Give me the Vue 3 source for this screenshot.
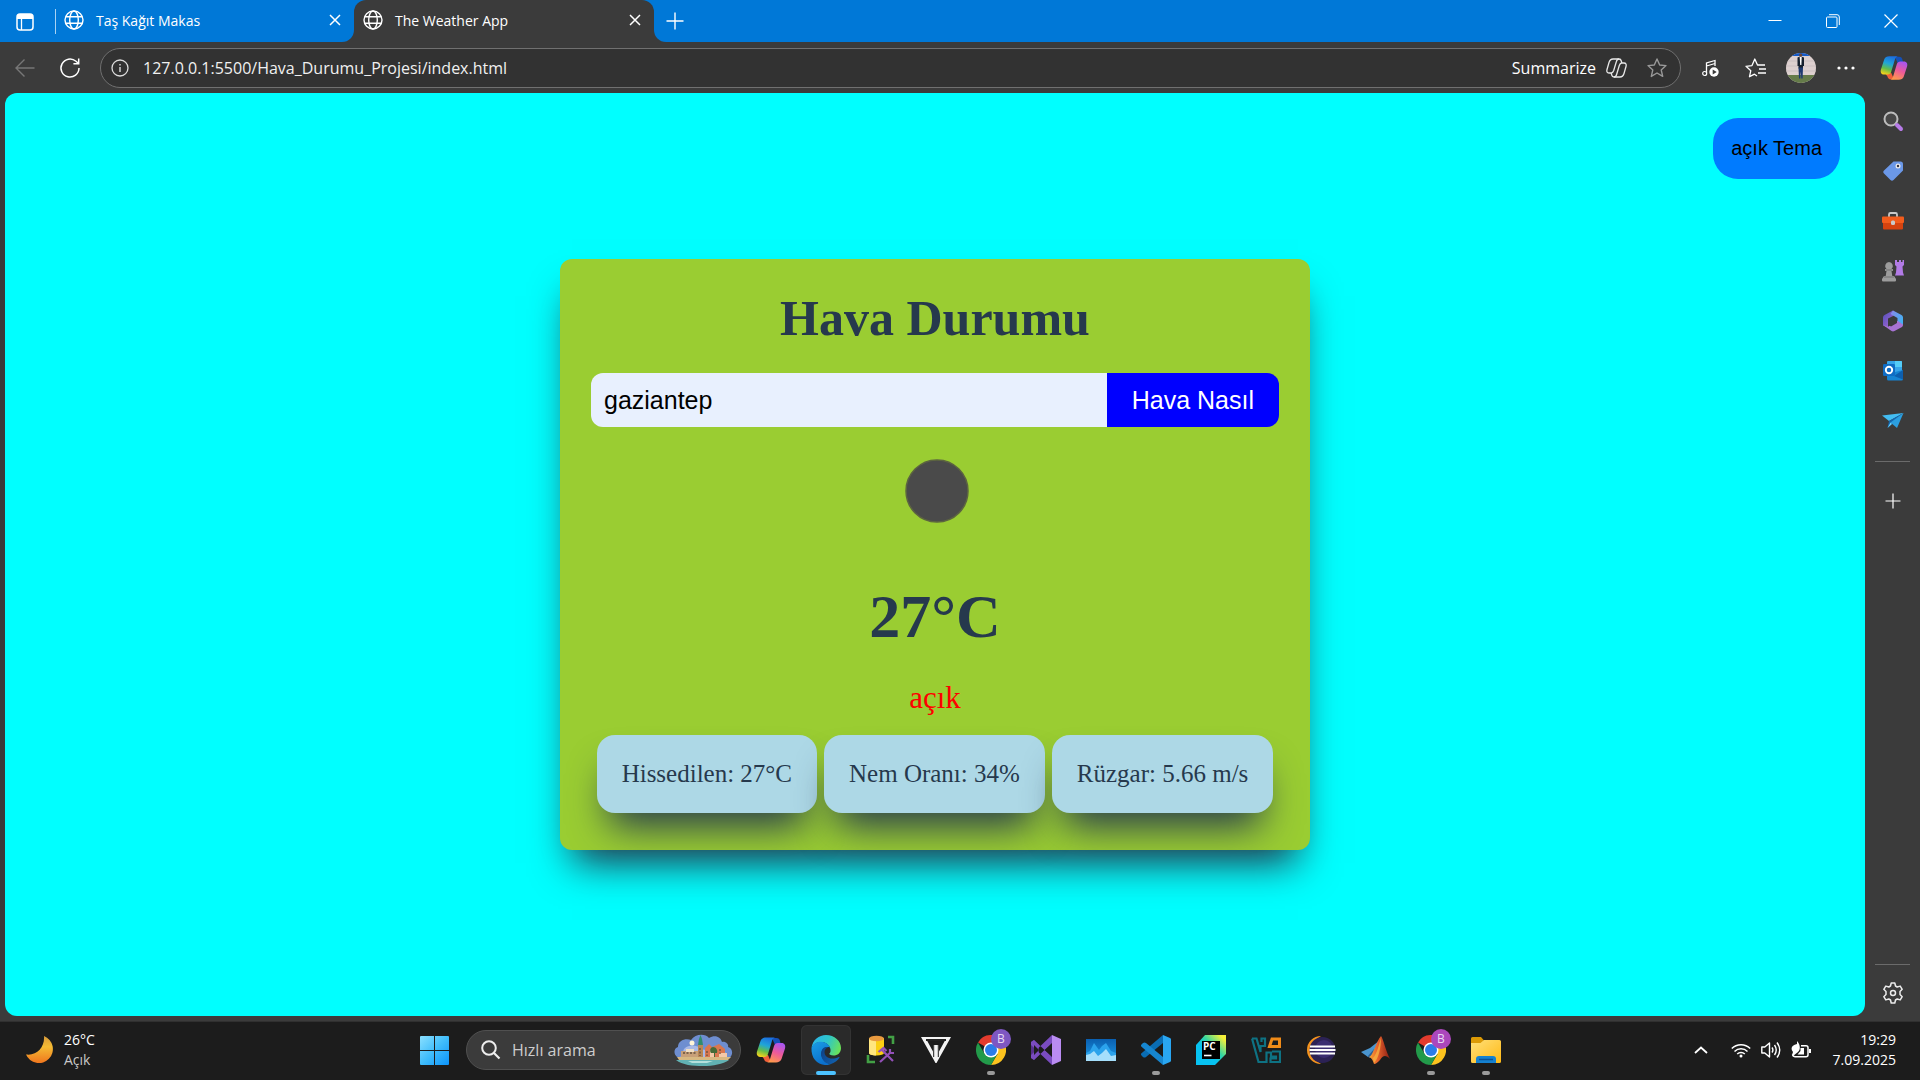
<script setup>
import { ref } from 'vue'

const city = ref('gaziantep')
const address = ref('127.0.0.1:5500/Hava_Durumu_Projesi/index.html')
const search = ref('')
const details = ['Hissedilen: 27°C', 'Nem Oranı: 34%', 'Rüzgar: 5.66 m/s']
</script>

<template>
  <div class="desktop">
    <svg class="defs" aria-hidden="true">
      <defs>
        <linearGradient id="cpA" x1="0.6" y1="0" x2="0.3" y2="1">
          <stop offset="0" stop-color="#1b6fe0" /><stop offset="0.4" stop-color="#1fa5d8" />
          <stop offset="0.7" stop-color="#63bd4a" /><stop offset="1" stop-color="#f4d21b" />
        </linearGradient>
        <linearGradient id="cpB" x1="0.7" y1="0" x2="0.3" y2="1">
          <stop offset="0" stop-color="#a855f0" /><stop offset="0.5" stop-color="#ee5a9a" />
          <stop offset="1" stop-color="#ff9a4a" />
        </linearGradient>
        <linearGradient id="edA" x1="0" y1="0.3" x2="1" y2="0.6">
          <stop offset="0" stop-color="#2bb5ea" /><stop offset="0.5" stop-color="#2ec5c9" />
          <stop offset="1" stop-color="#6be257" />
        </linearGradient>
        <linearGradient id="edB" x1="0" y1="0" x2="0.5" y2="1">
          <stop offset="0" stop-color="#1a9ee6" /><stop offset="1" stop-color="#0b6fcb" />
        </linearGradient>
        <linearGradient id="edC" x1="0" y1="0" x2="1" y2="0.6">
          <stop offset="0" stop-color="#0d3f85" /><stop offset="1" stop-color="#1160ad" />
        </linearGradient>
        <linearGradient id="moon" x1="0" y1="0" x2="0" y2="1">
          <stop offset="0" stop-color="#d89a3a" /><stop offset="0.4" stop-color="#f4bb33" /><stop offset="1" stop-color="#f0761e" />
        </linearGradient>
        <linearGradient id="win" x1="0" y1="0" x2="1" y2="1">
          <stop offset="0" stop-color="#8be0ff" /><stop offset="0.5" stop-color="#40bdfb" /><stop offset="1" stop-color="#0c93fa" />
        </linearGradient>
        <linearGradient id="pc" x1="0" y1="1" x2="1" y2="0">
          <stop offset="0.4" stop-color="#07c3f2" /><stop offset="0.6" stop-color="#35d6a0" /><stop offset="0.9" stop-color="#f5f03a" />
        </linearGradient>
        <linearGradient id="fold" x1="0" y1="0" x2="1" y2="1">
          <stop offset="0" stop-color="#ffe07a" /><stop offset="1" stop-color="#ffb914" />
        </linearGradient>
        <linearGradient id="mat" x1="0" y1="0" x2="1" y2="0">
          <stop offset="0" stop-color="#f7a734" /><stop offset="0.4" stop-color="#e8632c" /><stop offset="1" stop-color="#8a1d14" />
        </linearGradient>
        <linearGradient id="mA" x1="0" y1="0" x2="1" y2="1">
          <stop offset="0" stop-color="#4f4fb8" /><stop offset="1" stop-color="#b06ad8" />
        </linearGradient>
        <linearGradient id="mB" x1="0" y1="0" x2="1" y2="0.6">
          <stop offset="0" stop-color="#8d86e8" /><stop offset="1" stop-color="#44b0f2" />
        </linearGradient>
        <linearGradient id="photo" x1="0" y1="0" x2="0" y2="1">
          <stop offset="0" stop-color="#0a5fb0" /><stop offset="1" stop-color="#1c9be6" />
        </linearGradient>
        <clipPath id="face"><circle cx="15" cy="15" r="15" /></clipPath>
      </defs>
      <symbol id="globe" viewBox="0 0 20 20">
        <g fill="none" stroke="#fff" stroke-width="1.4">
          <circle cx="10" cy="10" r="9" /><ellipse cx="10" cy="10" rx="4.3" ry="9" /><path d="M1.8 6.8h16.4M1.8 13.2h16.4" />
        </g>
      </symbol>
      <symbol id="cross" viewBox="0 0 14 14"><path d="M2 2l10 10M12 2L2 12" stroke="#fff" stroke-width="1.5" /></symbol>
      <symbol id="copilot" viewBox="0 0 30 28">
        <path fill="#1450b8" d="M16 2h4.500c2.200 0 3 1.200 3.500 3l1 4h-6z" />
        <path fill="#f0603a" d="M5 19h7l3 7H11.500c-2 0-3-1-3.500-3z" />
        <path fill="url(#cpA)" d="M10 1.500h9c-1.800.6-2.600 2-3.200 4L12 18c-.6 1.900-1.900 3-3.800 3H4.500C1.200 21 .2 18.500 1 15.500L4.500 5C5.300 2.700 7.400 1.500 10 1.500z" />
        <path fill="url(#cpB)" d="M20 26.500h-9c1.800-.6 2.600-2 3.200-4L18 10c.6-1.900 1.900-3 3.800-3h3.700c3.300 0 4.300 2.500 3.500 5.500L25.500 23c-.8 2.300-2.900 3.500-5.500 3.500z" />
      </symbol>
      <symbol id="chrome" viewBox="0 0 30 30">
        <path fill="#e33b2e" d="M15 15L2 7.500A15 15 0 0 1 28 7.500H15z" />
        <path fill="#fcc31e" d="M15 15V7.500h13A15 15 0 0 1 15 30l6.500-11z" />
        <path fill="#229a4a" d="M2 7.500l6.500 11.200L15 22.500h2.200L13.500 30A15 15 0 0 1 2 7.500z" />
        <path fill="#229a4a" d="M13.500 30l1.500 0 6.500-11.300L15 22z" />
        <circle cx="15" cy="15" r="7.500" fill="#fff" /><circle cx="15" cy="15" r="6" fill="#2b7de9" />
      </symbol>
    </svg>

    <header class="titlebar">
      <div class="tabs-left">
        <button class="plain workspace" aria-label="Workspaces">
          <svg width="18" height="18" viewBox="0 0 18 18"><rect x="1" y="1" width="16" height="16" rx="3" fill="none" stroke="#fff" stroke-width="1.5" /><path d="M1 4a3 3 0 0 1 3-3h10a3 3 0 0 1 3 3v2H1z" fill="#fff" /><path d="M5.500 5v12" stroke="#fff" stroke-width="1.300" /></svg>
        </button>
        <div class="tab">
          <svg width="20" height="20"><use href="#globe" /></svg><span>Taş Kağıt Makas</span>
          <button class="plain" aria-label="Close tab"><svg width="14" height="14"><use href="#cross" /></svg></button>
        </div>
      </div>
      <div class="tab-active-wrap">
        <div class="tab active">
          <svg width="20" height="20"><use href="#globe" /></svg><span>The Weather App</span>
          <button class="plain" aria-label="Close tab"><svg width="14" height="14"><use href="#cross" /></svg></button>
        </div>
      </div>
      <div class="tabs-right">
        <button class="plain" aria-label="New tab"><svg width="18" height="18" viewBox="0 0 18 18"><path d="M9 0.500v17M0.500 9h17" stroke="#fff" stroke-width="1.400" /></svg></button>
        <div class="window-controls">
          <button class="plain" aria-label="Minimize"><svg width="14" height="14" viewBox="0 0 14 14"><path d="M0.500 6.500h13" stroke="#fff" /></svg></button>
          <button class="plain" aria-label="Restore"><svg width="14" height="14" viewBox="0 0 14 14" fill="none" stroke="#fff"><rect x="0.500" y="3" width="10.500" height="10.500" rx="1" /><path d="M3 0.700h8a2.300 2.300 0 0 1 2.300 2.300v8" /></svg></button>
          <button class="plain" aria-label="Close"><svg width="14" height="14" viewBox="0 0 14 14"><path d="M0.500 0.500l13 13M13.500 0.500l-13 13" stroke="#fff" stroke-width="1.200" /></svg></button>
        </div>
      </div>
    </header>

    <div class="toolbar">
      <button class="plain back" aria-label="Back"><svg width="20" height="20" viewBox="0 0 20 20"><path d="M19.500 10H1M9.500 1.500L1 10l8.500 8.500" fill="none" stroke="#777" stroke-width="1.400" /></svg></button>
      <button class="plain reload" aria-label="Reload"><svg width="22" height="22" viewBox="0 0 22 22"><path d="M20 11a9 9 0 1 1-3-6.700L19.500 6.500M19.700 1.500v5.300h-5.300" fill="none" stroke="#fff" stroke-width="1.500" /></svg></button>
      <div class="omnibox">
        <svg width="18" height="18" viewBox="0 0 18 18"><circle cx="9" cy="9" r="8" fill="none" stroke="#ddd" stroke-width="1.300" /><path d="M9 8v5M9 5v1.500" stroke="#ddd" stroke-width="1.400" /></svg>
        <input v-model="address" aria-label="Address" />
        <button class="plain summarize">Summarize
          <svg width="21" height="20" viewBox="0 0 21 20" fill="none" stroke="#e8e8e8" stroke-width="1.300" stroke-linejoin="round"><path d="M7 1h6c1.500 0 2 .8 2.300 2l.5 2H18c2 0 2.500 1.600 2 3.500l-2 7c-.6 2-1.500 3.500-4 3.500H8c-1.500 0-2-.8-2.300-2L5.200 15H3c-2 0-2.500-1.600-2-3.500l2-7C3.600 2.500 4.500 1 7 1z" /><path d="M13 1c-1.500 0-2.200 1-2.600 2.500L7.700 12.500C7.200 14 6.500 15 5.200 15M8 19c1.500 0 2.200-1 2.600-2.500l2.700-9C13.800 6 14.500 5 15.800 5" /></svg>
        </button>
        <button class="plain" aria-label="Favorite"><svg width="20" height="20" viewBox="0 0 20 20"><path d="M10 1l2.700 6 6.300.6-4.800 4.300 1.500 6.500L10 15l-5.700 3.400 1.500-6.500L1 7.600 7.300 7z" fill="none" stroke="#999" stroke-width="1.400" stroke-linejoin="round" /></svg></button>
      </div>
      <div class="tool-actions">
        <button class="plain" aria-label="Media"><svg width="17" height="18" viewBox="0 0 17 18"><path d="M4.500 14V4l8.500-2.500V7M4.500 7L13 4.500" fill="none" stroke="#fff" stroke-width="1.300" /><circle cx="2.700" cy="14.500" r="2" fill="none" stroke="#fff" stroke-width="1.200" /><circle cx="12" cy="13" r="4.700" fill="#fff" /><path d="M10.700 10.500v5l4-2.500z" fill="#3b3b3b" /></svg></button>
        <button class="plain" aria-label="Favorites"><svg width="21" height="20" viewBox="0 0 21 20" fill="none" stroke="#fff" stroke-width="1.300" stroke-linejoin="round"><path d="M12 18l-2.500-1.800-5 2.500 1.300-6L1 8.300l6-.7L9.800 1l2.700 6H20M14 11h7M13 15h8" /></svg></button>
        <button class="plain" aria-label="Profile"><svg width="30" height="30" viewBox="0 0 30 30"><g clip-path="url(#face)"><path fill="#ddd0cf" d="M0 0h30v30H0z" /><path fill="#155ac8" d="M0 0h30v3H0z" /><path fill="#657b49" d="M0 22h30v8H0z" /><path d="M0 8h30M0 13h30M0 18h30" stroke="#cbbfc0" /><path fill="#17202e" d="M11.500 4.500l2.500-1h1l3 1V13h-1v2.500h-4.500V13h-1z" /><path fill="#fff" d="M13.700 4h2l-.3 8h-1.200z" /><circle cx="14.700" cy="2" r="1.600" fill="#6b4637" /><path fill="#1e3a70" d="M12.500 14.500h4.500l-.4 11h-1.300l-.5-7-.5 7H13z" /></g></svg></button>
        <button class="plain" aria-label="More"><svg width="18" height="4" viewBox="0 0 18 4" fill="#fff"><circle cx="2" cy="2" r="1.600" /><circle cx="9" cy="2" r="1.600" /><circle cx="16" cy="2" r="1.600" /></svg></button>
        <button class="plain wide" aria-label="Copilot"><svg width="28" height="28"><use href="#copilot" /></svg></button>
      </div>
    </div>

    <div class="content">
      <main class="page">
        <button class="theme">açık Tema</button>
        <section class="card">
          <h1>Hava Durumu</h1>
          <form @submit.prevent>
            <input v-model="city" aria-label="Şehir" />
            <button>Hava Nasıl</button>
          </form>
          <svg class="weather-icon" viewBox="0 0 124 124" role="img" aria-label="açık"><circle cx="64" cy="62" r="31" fill="#4a4a4a" stroke="#5c6440" stroke-width="1.500" /></svg>
          <h2>27°C</h2>
          <p>açık</p>
          <div class="details"><div v-for="d in details" :key="d" class="detail">{{ d }}</div></div>
        </section>
      </main>

      <aside class="sidebar">
        <button class="plain" aria-label="Search"><svg width="22" height="22" viewBox="0 0 22 22"><circle cx="9" cy="9" r="6.500" fill="#484848" stroke="#bdbdbd" stroke-width="2" /><path d="M15 15l4 4" stroke="#b77be8" stroke-width="4" stroke-linecap="round" /></svg></button>
        <button class="plain" aria-label="Shopping"><svg width="22" height="22" viewBox="0 0 22 22"><path d="M11.500 1.500h7A2.500 2.500 0 0 1 21 4v6.500L11.500 20c-1 1-2 1-3 0L2 13.500c-1-1-1-2 0-3z" fill="#6b98e8" /><circle cx="16" cy="6" r="2.500" fill="#eee" /><circle cx="16" cy="6" r="1.200" fill="#334" /></svg></button>
        <button class="plain" aria-label="Tools"><svg width="22" height="20" viewBox="0 0 22 20"><path d="M7 6V3.500A1.500 1.500 0 0 1 8.500 2h5A1.500 1.500 0 0 1 15 3.500V6" fill="none" stroke="#c9c9c9" stroke-width="1.800" /><rect y="5.500" width="22" height="6.500" rx="1" fill="#f25c1c" /><path d="M1 12h20v5.500a1 1 0 0 1-1 1H2a1 1 0 0 1-1-1z" fill="#d6430f" /><rect x="9" y="9.500" width="4" height="4.500" rx="1.500" fill="#c9c9c9" /></svg></button>
        <button class="plain" aria-label="Games"><svg width="22" height="22" viewBox="0 0 22 22"><path d="M13 0h2v2h2V0h2v2h1.500V0H22v5l-1.500 1.500.5 6 1 3h-9l1-3 .5-6L13 5z" fill="#b27be6" /><path d="M7 2a4 4 0 0 1 2.500 7h1.500v2H9.500l.8 5H12l2 3v1.500a1 1 0 0 1-1 1H1a1 1 0 0 1-1-1V19l2-3h1.700l.8-5H3V9h1.500A4 4 0 0 1 7 2z" fill="#9c9c9c" /><path d="M3.500 10h7M2 17h10" stroke="#707070" stroke-width="1.200" /></svg></button>
        <button class="plain" aria-label="Microsoft 365"><svg width="22" height="22" viewBox="0 0 22 22"><path d="M11 .5L2.500 5A3 3 0 0 0 1 7.500v8l5 2V8.500L13 5z" fill="url(#mA)" /><path d="M11 .5l8.500 4.500A3 3 0 0 1 21 7.500v8l-5.500-4V8L8.500 4z" fill="url(#mB)" /><path d="M1 15l8.500 6a3 3 0 0 0 3 0L20 17a3 3 0 0 0 1-2.500l-5.500-3.700L6 16.800z" fill="#a873d4" /><path d="M11 7l4 2v4l-6 3.500-2.500-1.500V9z" fill="#3b3b3b" /></svg></button>
        <button class="plain" aria-label="Outlook"><svg width="22" height="20" viewBox="0 0 22 20"><rect x="5" width="15" height="18" rx="1" fill="#36a5ea" /><path d="M13 0h6a1 1 0 0 1 1 1v5h-7z" fill="#54cdf8" /><path d="M5 13l8-2 8-2v9a1.500 1.500 0 0 1-1.500 1.500h-13A1.500 1.500 0 0 1 5 18z" fill="#1684d3" /><path d="M12 15l9-6v9.500z" fill="#0d5fae" /><rect x="1" y="3" width="12" height="12" rx="1.200" fill="#0f6cc4" /><circle cx="7" cy="9" r="3.200" fill="none" stroke="#fff" stroke-width="1.900" /></svg></button>
        <button class="plain" aria-label="Drop"><svg width="22" height="18" viewBox="0 0 22 18"><path d="M0 3.500L21.500 1 7 9z" fill="#43bdf2" /><path d="M21.500 1L7 9l-1.500 7z" fill="#1467b0" /><path d="M21.500 1L8.500 10.500 15 16z" fill="#2b9fe0" /><path d="M5.500 16l3-5.500L10 12z" fill="#6bd2fa" /></svg></button>
        <hr />
        <button class="plain" aria-label="Add"><svg width="16" height="16" viewBox="0 0 16 16"><path d="M8 0.500v15M0.500 8h15" stroke="#fff" stroke-width="1.200" /></svg></button>
        <hr class="bottom" />
        <button class="plain gear" aria-label="Settings"><svg width="22" height="22" viewBox="0 0 22 22" fill="none" stroke="#ececec" stroke-width="1.500" stroke-linejoin="round"><path d="M9.200 1h3.600l.7 3 1.700 1 3-.9 2 3.200-2.200 2.200v3l2.200 2.200-2 3.200-3-.9-1.700 1-.7 3H9.200l-.7-3-1.700-1-3 .9-2-3.200L4 12.500v-3L1.800 7.300l2-3.200 3 .9 1.700-1z" /><circle cx="11" cy="11" r="2.500" /></svg></button>
      </aside>
    </div>

    <footer class="taskbar">
      <div class="weather">
        <svg width="30" height="30" viewBox="0 0 30 30"><path d="M19 1A14 14 0 1 1 1 19.500C12 21 20 12 19 1z" fill="url(#moon)" /></svg>
        <div><span>26°C</span><span class="dim">Açık</span></div>
      </div>
      <nav class="apps">
        <button class="app" aria-label="Start"><svg width="29" height="29" viewBox="0 0 29 29" fill="url(#win)"><path d="M1 0h13v14H0V1a1 1 0 0 1 1-1zM15 0h13a1 1 0 0 1 1 1v13H15zM0 15h14v14H1a1 1 0 0 1-1-1zM15 15h14v13a1 1 0 0 1-1 1H15z" /></svg></button>
        <label class="search">
          <svg width="20" height="20" viewBox="0 0 20 20"><circle cx="8" cy="8" r="6.800" fill="none" stroke="#eee" stroke-width="2" /><path d="M13 13l5.500 5.500" stroke="#eee" stroke-width="2.200" /></svg>
          <input v-model="search" placeholder="Hızlı arama" />
          <svg width="60" height="32" viewBox="0 0 60 32">
            <path d="M6 24C-1 23-1 14 4 13c0-7 8-9 13-7C21 0 31-1 35 4c6-4 12-1 13 4 4-1 7 3 6 5 5 1 6 9 0 12z" fill="#6e8ed0" />
            <path d="M10 15c6-6 14-3 18 0s18-2 24 4v5H6z" fill="#a9b9e6" /><circle cx="18" cy="9" r="2.500" fill="#fff5d8" />
            <path fill="#c8a078" d="M7 17h18v8H7z" /><path fill="#f1dfc4" d="M12 15h8v3h-8z" /><path fill="#b98756" d="M24 11h5v14h-5z" /><path fill="#2f8c6c" d="M24 11l1-6 1.500-4L28 5l1 6z" /><path fill="#d9774f" d="M31 14l4-4 3 3 5-2 2-1 6 5v10H31z" /><path fill="#f4c9a8" d="M36 16h4v9h-4zM45 19h8v6h-8z" /><path fill="#466b37" d="M39 13c3 0 5 3 4 6h-2v6h-1v-6h-3c-2-3 0-6 2-6z" />
            <path d="M9 19h14M26 14v8M46 15v5M33 17v5" stroke="#66503e" stroke-width="1.300" stroke-dasharray="2 1.500" />
            <path fill="#d8b982" d="M3 23h54l-3 3H5z" /><path fill="#62b2b3" d="M2 26h53c-6 4-16 6-26 6S8 31 2 26z" /><path fill="#b5e0dc" d="M14 27h25l-6 2H18z" />
          </svg>
        </label>
        <button class="app first" aria-label="Copilot"><svg width="30" height="28"><use href="#copilot" /></svg></button>
        <button class="app current" aria-label="Edge"><svg width="30" height="30" viewBox="0 0 30 30"><path fill="url(#edA)" d="M.5 13C1.500 5 8 0 15 0c8.500 0 15 6 15 13 0 5-3.500 7.500-7.500 7.500-3 0-4.500-1-4.100-1.900 2.100-1.600 1.600-7.100-2.900-10.100C10 5.500 3 7.500.5 13z" /><path fill="url(#edB)" d="M.5 13C2 7.500 9 5 14.500 7.800c3.500 1.800 4.500 4.200 4.300 4.700C14 10.500 8.500 16 11 22c1.500 4 6 7 9 7-2 1-5 1-6 1C6 29.500 0 23 .5 13z" /><path fill="url(#edC)" d="M10.500 16c-2 7 3.500 13.500 9.500 13 4-1.200 7-4 8.500-6.500.3-.5-.2-.7-.7-.5-7.800 3.500-14.300.5-14.300-5 0-2.500 1.500-4 3.500-4.800-3-.7-5.500.8-6.500 3.800z" /></svg></button>
        <button class="app" aria-label="Database tools"><svg width="30" height="30" viewBox="0 0 30 30"><path d="M22 2h5v7M2 20v7h7" fill="none" stroke="#42a045" stroke-width="2.600" /><path d="M3 3h15v15a7.500 2.500 0 0 1-15 0z" fill="#fbcf13" /><path d="M3 3h7v17.500c-4-.2-7-1-7-2.500z" fill="#ffe680" /><ellipse cx="10.500" cy="3.500" rx="7.500" ry="2.800" fill="#e99a3f" /><path d="M14 27l11-10M16 15l11 11M12.500 17l5-4 3 3M24 14v4h4" fill="none" stroke="#9250b8" stroke-width="2.200" /></svg></button>
        <button class="app" aria-label="Studio"><svg width="30" height="26" viewBox="0 0 30 26"><path d="M0 0h30L15.500 26h-1zM6 3.500l6 11V8h6v6.500l6-11z" fill="#f4f4f4" fill-rule="evenodd" /><path d="M5 3h20" stroke="#222" stroke-width="2" /><path d="M13.700 8h2.600v15h-2.600z" fill="#f4f4f4" /><path d="M12.700 6v14M17.300 6v14" stroke="#1c1c1c" /></svg></button>
        <button class="app running" aria-label="Chrome"><svg width="30" height="30"><use href="#chrome" /></svg><span class="badge">B</span></button>
        <button class="app" aria-label="Visual Studio"><svg width="30" height="30" viewBox="0 0 30 30"><path fill="#55308c" d="M0 7l3-2 5 5v10l-5 5-3-2z" /><path fill="#7a4cc0" d="M3 5l18 17v8L0 10V7zM3 25L21 8V0L0 20v3z" /><path fill="#ba8cf2" d="M21 0l9 4v22l-9 4z" /><path fill="#1c1c1c" d="M3 10l5 5-5 5zM21 9v12l-7-6z" /></svg></button>
        <button class="app" aria-label="Monitor"><svg width="30" height="22" viewBox="0 0 30 22"><path fill="url(#photo)" d="M0 0h30v22H0z" /><path fill="#2ba3ec" d="M0 14l4-2 4-8 5 7 3-4 4-3 5 8 5 2v8H0z" /><path fill="#a5defb" d="M0 16l4-1 4-3 4 5 4-3 4-4 5 7 5-1v6H0z" /></svg></button>
        <button class="app running" aria-label="Visual Studio Code"><svg width="30" height="30" viewBox="0 0 30 30"><path fill="#0a6db4" d="M22 0v8L5 22c-1 .8-2 .8-3 0l-1.500-1.500c-.8-.8-.8-1.500 0-2.300z" /><path fill="#1686d0" d="M22 30v-8L5 8C4 7.200 3 7.200 2 8L.5 9.500c-.8.800-.8 1.500 0 2.300z" /><path fill="#29a6f2" d="M22 0l7 3a2 2 0 0 1 1 2v20a2 2 0 0 1-1 2l-7 3z" /></svg></button>
        <button class="app" aria-label="PyCharm"><svg width="30" height="30" viewBox="0 0 30 30"><path fill="url(#pc)" d="M9 0h21v19L19 30H0V10z" /><path d="M6 6h18v18H6z" /><text x="7" y="15" class="pc">PC</text><path d="M8 20.500h7.500" stroke="#fff" stroke-width="1.600" /></svg></button>
        <button class="app" aria-label="VirtualBox"><svg width="30" height="27" viewBox="0 0 30 27" fill="none" stroke="#0e7283" stroke-width="2.200"><path d="M1 1.500h4.500l4 13.500V9h4.500V1.500h-3.500V5M1 1.500l6.500 23.500h8V15.500H20v4h5v2h-5.500V25H29V14.500h-8" /><path d="M18.500 9.500l2.500-7.500h7.500v7.500z" stroke="#f08b18" stroke-width="3" /></svg></button>
        <button class="app" aria-label="Eclipse"><svg width="30" height="28" viewBox="0 0 30 28"><path d="M15 0A14 14 0 0 0 15 28 16 16 0 0 1 15 0z" fill="#f5941e" /><circle cx="16.500" cy="14" r="13" fill="#2c2255" /><circle cx="18" cy="13" r="9" fill="#443582" opacity="0.600" /><path d="M4 10.500h25M3.500 14h26M4 17.500h25" stroke="#fff" stroke-width="1.900" /></svg></button>
        <button class="app" aria-label="MATLAB"><svg width="30" height="28" viewBox="0 0 30 28"><path fill="#4a95cf" d="M0 16l9-4 5-4c2-1 3-3 4-4l-7 16-4 1z" /><path fill="#2d5f94" d="M7 20l6-7-2 8-3 1z" /><path fill="url(#mat)" d="M8 21c4-1 7-15 12-21 2 2 5 16 9 23-5-5-7-3-10 1-2 2-4 4-6 4-1-3-2-6-5-7z" /><path fill="#f9ba43" d="M12 22c4-4 6-14 8-20 0 9-2 20-7 25z" opacity="0.700" /></svg></button>
        <button class="app running" aria-label="Chrome, second profile"><svg width="30" height="30"><use href="#chrome" /></svg><span class="badge pink">B</span></button>
        <button class="app running" aria-label="File Explorer"><svg width="30" height="27" viewBox="0 0 30 27"><path fill="#dc9a06" d="M0 1.500A1.500 1.500 0 0 1 1.500 0H10l3 3.500L10 8H0z" /><path fill="url(#fold)" d="M0 6h9.500L13 3h15.500A1.500 1.500 0 0 1 30 4.500v20a1.500 1.500 0 0 1-1.500 1.500h-27A1.500 1.500 0 0 1 0 24.500z" /><path fill="#1581d0" d="M5 26v-4a3 3 0 0 1 3-3h14a3 3 0 0 1 3 3v4z" /><path d="M8 22.500h14" stroke="#0a5298" stroke-width="1.500" /></svg></button>
      </nav>
      <div class="tray">
        <svg width="14" height="8" viewBox="0 0 14 8"><path d="M1 7l6-5.500L13 7" fill="none" stroke="#fff" stroke-width="1.800" /></svg>
        <svg class="wifi" width="20" height="16" viewBox="0 0 20 16" fill="none" stroke="#fff" stroke-width="1.500"><path d="M.8 6.500a13 13 0 0 1 18.400 0M3.500 9.500a9.200 9.200 0 0 1 13 0M6.200 12a5.500 5.500 0 0 1 7.600 0" /><circle cx="10" cy="14" r="1.500" fill="#fff" stroke="none" /></svg>
        <svg width="20" height="18" viewBox="0 0 20 18" fill="none" stroke="#fff" stroke-width="1.400" stroke-linejoin="round"><path d="M.8 6h3L8.500 2v14l-4.700-4h-3zM11 6.500q1.800 2.500 0 5M13.500 4q3.500 5 0 10M16 1.500q5.500 7.500 0 15" /></svg>
        <svg width="20" height="18" viewBox="0 0 20 18"><path d="M10 4.700h5a2 2 0 0 1 2 2v7a2 2 0 0 1-2 2H4a2.500 2.500 0 0 1-2.500-2" fill="none" stroke="#fff" stroke-width="1.500" /><path d="M18 8h2v4h-2zM6.500 13.500l3-3.500V7H13v6.500z" fill="#fff" /><path d="M6 0c3 3 4 8 1 11l-5 4-1-1 1-3C-1 7 1 4 6 3z" fill="#fff" /></svg>
        <div class="clock"><span>19:29</span><span>7.09.2025</span></div>
      </div>
    </footer>
  </div>
</template>

<style>
body { margin: 0; background: #3b3b3b; }
</style>

<style scoped>
.desktop { min-height: 100vh; display: flex; flex-direction: column; background: #3b3b3b; color: #fff; font-family: "Open Sans", "Noto Sans", sans-serif; }
.desktop * { box-sizing: border-box; }
.defs { position: absolute; width: 0; height: 0; }
svg { flex: none; display: block; }
.plain { background: none; border: 0; padding: 0; color: inherit; font: inherit; display: flex; align-items: center; justify-content: center; flex: none; }

.titlebar { display: flex; height: 42px; flex: none; }
.tabs-left { display: flex; width: 354px; background: #0078d7; border-radius: 0 0 12px 0; }
.workspace { width: 56px; height: 25px; margin-top: 9px; padding-right: 6px; border-right: 1px solid #a8d2f3; }
.tab { flex: 1; display: flex; align-items: center; gap: 12px; padding: 0 12px 2px 8px; font-size: 14px; }
.tab span { flex: 1; }
.tab-active-wrap { width: 300px; display: flex; background: linear-gradient(#0078d7 14px, #3b3b3b 14px); }
.active { padding-left: 9px; background: #3b3b3b; border-radius: 12px 12px 0 0; }
.tabs-right { flex: 1; display: flex; justify-content: space-between; align-items: center; background: #0078d7; border-radius: 0 0 0 12px; padding: 0 22px 0 12px; }
.window-controls { display: flex; gap: 44px; }

.toolbar { height: 51px; flex: none; display: flex; align-items: center; padding: 0 1px 0 15px; }
.reload { margin: 0 19px 0 24px; }
.omnibox { flex: 1; height: 40px; display: flex; align-items: center; gap: 14px; background: #323232; border: 1px solid #707070; border-radius: 20px; padding: 0 13px 0 10px; }
.omnibox input { flex: 1; min-width: 0; border: 0; padding: 0; outline: 0; background: none; color: #f0f0f0; font: inherit; font-size: 16px; }
.summarize { gap: 10px; font-size: 16px; margin-right: 16px; }
.omnibox > .summarize + .plain { margin-left: -10px; }
.tool-actions { display: flex; align-items: center; padding-left: 7px; }
.tool-actions .plain { width: 45px; height: 40px; }
.tool-actions .wide { width: 51px; }

.content { flex: 1; display: flex; }
.page { flex: 1; margin: 0 0 5px 5px; background: #0ff; border-radius: 12px; display: flex; align-items: center; justify-content: center; position: relative; }
.theme { position: absolute; top: 25px; right: 25px; height: 61px; padding: 0 18px; border: 0; border-radius: 25px; background: #007bff; color: #000; font: 20px "Liberation Sans", sans-serif; }
.card { width: 750px; padding: 31px 31px 37px; border-radius: 12px; background: #9acd32; color: #26394d; box-shadow: rgb(38, 57, 77) 0 25px 38px -12px; font-family: "Liberation Serif", serif; text-align: center; }
h1 { margin: 0 0 26px; font-size: 50px; line-height: 57px; }
form { display: flex; height: 54px; }
form input, form button { border: 0; font: 25px "Liberation Sans", sans-serif; }
form input { flex: 1; min-width: 0; padding: 0 13px; background: #e8f0fe; color: #000; border-radius: 12px 0 0 12px; outline: 0; }
form button { padding: 0 25px; background: #00f; color: #fff; border-radius: 0 12px 12px 0; }
.weather-icon { width: 124px; height: 124px; margin: 2px auto 28px; }
h2 { margin: 0 0 28px; font-size: 62px; line-height: 71px; }
p { margin: 0 0 19px; font-size: 31px; line-height: 36px; color: #f00; }
.details { display: flex; justify-content: center; gap: 7px; }
.detail { position: relative; padding: 25px; border-radius: 18px; background: #add8e6; box-shadow: rgb(38, 57, 77) 0 25px 38px -12px; font-size: 25px; line-height: 28px; white-space: nowrap; }

.sidebar { width: 55px; display: flex; flex-direction: column; align-items: center; padding-top: 3px; }
.sidebar .plain { height: 50px; width: 55px; }
.sidebar hr { width: 35px; height: 1px; border: 0; margin: 15px 0 14px; background: #6b6b6b; }
.sidebar hr.bottom { margin: auto 0 3px; }
.sidebar .gear { margin-bottom: 3px; }

.taskbar { height: 59px; flex: none; display: grid; grid-template-columns: 1fr auto 1fr; padding-bottom: 2px; background: #1c1c1c; border-top: 1px solid #303030; line-height: 20px; }
.weather { display: flex; align-items: center; gap: 9px; padding-left: 25px; font-size: 14px; }
.weather span { display: block; }
.dim { color: #c8c8c8; }
.apps { display: flex; align-items: center; }
.app { position: relative; width: 55px; height: 50px; padding: 0; border: 0; background: none; display: flex; align-items: center; justify-content: center; }
.first { margin-left: 2px; }
.current { width: 50px; margin: 0 2px 0 3px; background: #2a2a2a; border-radius: 6px; box-shadow: inset 0 0 0 1px #333; }
.current::after, .running::after { content: ""; position: absolute; bottom: 0; width: 20px; height: 4px; border-radius: 2px; background: #4cc2ff; }
.running::after { width: 8px; background: #9a9a9a; }
.badge { position: absolute; top: 4px; right: 7px; width: 20px; height: 20px; border-radius: 50%; background: #7e57c2; color: #e6dcf5; font: 12px/20px "Open Sans", sans-serif; text-align: center; }
.pink { background: #ab47bc; }
.pc { font: bold 10px "Open Sans", sans-serif; fill: #fff; }
.search { width: 275px; height: 40px; margin-left: 4px; display: flex; align-items: center; gap: 11px; padding: 0 6px 0 14px; border: 1px solid #505050; border-radius: 20px; background: #3b3b3b; }
.search input { flex: 1; min-width: 0; padding: 0; border: 0; outline: 0; background: none; color: #fff; font: 16px "Open Sans", sans-serif; }
.search input::placeholder { color: #cdcdcd; opacity: 1; }
.tray { display: flex; align-items: center; justify-content: flex-end; gap: 10px; padding-right: 24px; }
.wifi { margin-left: 13px; }
.clock { min-width: 75px; text-align: right; font-size: 14px; }
.clock span { display: block; }
</style>
